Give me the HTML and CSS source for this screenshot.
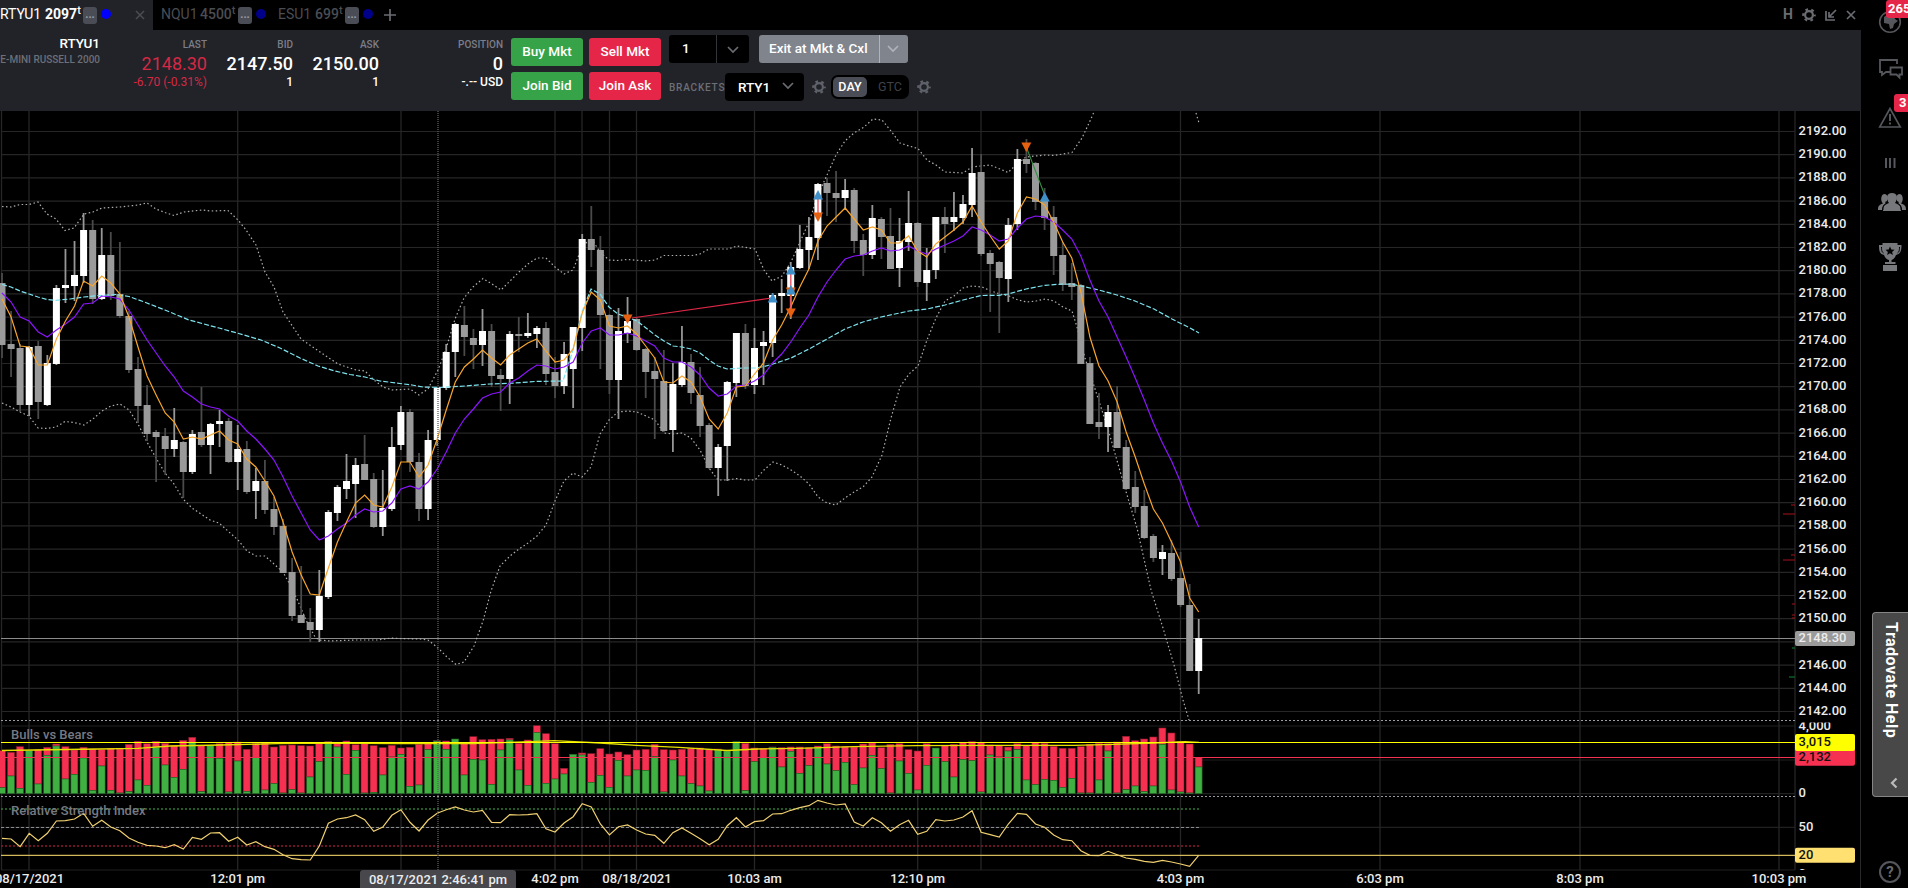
FILE: index.html
```
<!DOCTYPE html>
<html lang="en">
<head>
<meta charset="UTF-8">
<title>RTYU1 2097t</title>
<link rel="stylesheet" href="styles.css">
</head>
<body>
<svg class="defs">
  <symbol id="gear" viewBox="0 0 14 14">
    <circle cx="7" cy="7" r="3.9" fill="none" stroke="currentColor" stroke-width="2.2"/>
    <circle cx="7" cy="7" r="5.7" fill="none" stroke="currentColor" stroke-width="2.2" stroke-dasharray="2.7 3.269" stroke-dashoffset="1.35"/>
  </symbol>
  <symbol id="chevron" viewBox="0 0 12 8">
    <path d="M1 1l5 5 5-5" fill="none" stroke="currentColor" stroke-width="1.7"/>
  </symbol>
</svg>

<div class="main">
  <div class="tabs">
    <div class="tab active">
      <span class="sym">RTYU1</span><b>2097<sup>t</sup></b><i class="more">...</i><i class="dot"></i>
      <svg class="close" width="10" height="10"><path d="M1 1l8 8M9 1l-8 8"/></svg>
    </div>
    <div class="tab nq">
      <span class="sym">NQU1</span><b>4500<sup>t</sup></b><i class="more">...</i><i class="dot"></i>
    </div>
    <div class="tab es">
      <span class="sym">ESU1</span><b>699<sup>t</sup></b><i class="more">...</i><i class="dot"></i>
    </div>
    <svg class="plus" width="12" height="12"><path d="M6 0v12M0 6h12"/></svg>
    <div class="win">
      <b>H</b>
      <svg width="14" height="14"><use href="#gear"/></svg>
      <svg width="12" height="12"><path d="M1 2v9h9M11 1l-7 7M4 3v5h5"/></svg>
      <svg width="10" height="10"><path d="M1 1l8 8M9 1l-8 8"/></svg>
    </div>
  </div>

  <div class="header">
    <div class="col name"><strong>RTYU1</strong><small>E-MINI RUSSELL 2000</small></div>
    <div class="col last"><label>LAST</label><span class="big">2148.30</span><span class="sub">-6.70 (-0.31%)</span></div>
    <div class="col bid"><label>BID</label><span class="big">2147.50</span><span class="sub">1</span></div>
    <div class="col ask"><label>ASK</label><span class="big">2150.00</span><span class="sub">1</span></div>
    <div class="col pos"><label>POSITION</label><span class="big">0</span><span class="sub">-.-- USD</span></div>
    <div class="orders">
      <button class="buy">Buy Mkt</button><button class="sell">Sell Mkt</button>
      <button class="buy">Join Bid</button><button class="sell">Join Ask</button>
    </div>
    <div class="controls">
      <div class="line">
        <div class="qty"><span>1</span><em><svg width="12" height="8"><use href="#chevron"/></svg></em></div>
        <div class="exit"><span>Exit at Mkt &amp; Cxl</span><em><svg width="12" height="8"><use href="#chevron"/></svg></em></div>
      </div>
      <div class="line second">
        <label>BRACKETS</label>
        <div class="select"><span>RTY1</span><svg width="12" height="8"><use href="#chevron"/></svg></div>
        <svg class="gear" width="14" height="14"><use href="#gear"/></svg>
        <div class="tif"><span class="on">DAY</span><span>GTC</span></div>
        <svg class="gear" width="14" height="14"><use href="#gear"/></svg>
      </div>
    </div>
  </div>

  <svg id="chart" width="1861" height="777" viewBox="0 111 1861 777"></svg>
</div>

<div class="side">
  <svg width="47" height="300" fill="none" stroke="#55575c" stroke-width="1.6">
    <circle cx="29" cy="22" r="10.3"/>
    <path d="M23 17l4-3 6 1 1 4 3 2-4 3-1 4-3 1-1-5-5-1z" fill="#55575c" stroke="none"/>
    <path d="M29 72l-4 0-4 3v-3h-2V60h17v4" stroke-width="1.8"/>
    <path d="M29.500 67.500h11.500v7h-2.500v3l-3-3h-6z" stroke-width="1.8"/>
    <path d="M29 108.500l10.300 18.500H18.700z"/>
    <path d="M29 114v7M29 122.500v2" stroke-width="2"/>
    <path d="M25 158v10M29 158v10M33.500 158v10" stroke-width="2"/>
    <g fill="#77787b" stroke="none">
      <path d="M17 210c0-4 1-5 5-6.500-3-3-2-9.500 1.500-9.500 3 0 4 4 2.500 7l-2 3c-2 1-3 3-3 6z"/>
      <path d="M45 210c0-4-1-5-5-6.500 3-3 2-9.500-1.500-9.500-3 0-4 4-2.500 7l2 3c2 1 3 3 3 6z"/>
      <path d="M22 211c0-5 1-6 6-8-3-4-3-10 3-10s6 6 3 10c5 2 6 3 6 8z"/>
      <path d="M21.500 243h15v2h4c0 7-1.500 9-5.500 10-1 3-3 4.500-4.500 5v2h4v2H24v-2h4v-2c-2-.5-4-2-5-5-4-1-5-3-5-10h3.500z"/>
      <path d="M22 265h14v6H22z"/>
    </g>
    <path d="M24 202.500c1.500-.5 2-1 2.500-2M38 202.500c-1.500-.5-2-1-2.500-2M22 210c0-3 .5-5 2.500-6M40 210c0-3-.5-5-2.500-6" stroke="#000" stroke-width=".8"/>
    <path d="M29 246.500l1.300 3 3.200.3-2.400 2.100.8 3.100-2.900-1.700-2.900 1.700.8-3.100-2.400-2.100 3.200-.3z" fill="#000" stroke="none"/>
    <path d="M20.500 247c0 4 .5 5 2 6M38.500 247c0 4-.5 5-2 6" stroke="#000" stroke-width="1"/>
  </svg>
  <span class="badge b1">265</span>
  <span class="badge b2">3</span>
  <div class="help"><span>Tradovate Help</span><svg width="8" height="12"><path d="M6.500 1.500L2 6l4.500 4.500"/></svg></div>
  <div class="question">?</div>
</div>
<script src="chart.js"></script>
</body>
</html>
```
FILE: styles.css
```
* { box-sizing: border-box; }
body {
  margin: 0;
  width: 1908px;
  height: 888px;
  overflow: hidden;
  display: flex;
  background: #000;
  color: #fff;
  font-family: Roboto, sans-serif;
}
i, em { font-style: normal; }
svg { display: block; flex: none; }
.defs { position: absolute; width: 0; height: 0; }
.main { width: 1861px; flex: none; }

/* tabs */
.tabs { display: flex; height: 30px; }
.tab {
  display: flex;
  align-items: center;
  height: 30px;
  color: #4b4d53;
  font-size: 14px;
  white-space: nowrap;
}
.tab.active { width: 153px; background: #222328; color: #fff; }
.tab b { font-weight: 700; width: 38px; margin-left: 5px; height: 20px; line-height: 20px; margin-top: -2px; }
.tab .sym { height: 20px; line-height: 20px; width: 40px; margin-top: -2px; font-weight: 400; }
.tab sup { font-size: 11px; line-height: 0; vertical-align: 5px; font-weight: 500; }
.tab.nq { margin-left: 8px; }
.tab.nq .sym { width: 35px; }
.tab.es { margin-left: 12px; }
.tab.es .sym { width: 33px; }
.tab.es b { width: 30px; }
.tab.nq b { width: 38px; }
.tab.nq b, .tab.es b { font-weight: 500; margin-left: 4px; }
.more {
  width: 14px;
  height: 17px;
  border-radius: 3px;
  background: #4a4d56;
  color: #9a9da5;
  font-size: 11px;
  font-weight: 700;
  line-height: 15px;
  text-align: center;
}
.dot { width: 10px; height: 10px; border-radius: 5px; background: #00008a; margin: -2px 0 0 4px; }
.active .dot { background: #0000ff; }
.close { margin-left: 24px; }
.close path { stroke: #4b4d53; stroke-width: 1.5; }
.plus { margin: 9px 0 0 11px; }
.plus path { stroke: #6a6c71; stroke-width: 1.7; }
.win { display: flex; align-items: center; margin-left: auto; padding-right: 5px; color: #6a6c71; height: 30px; }
.win b { font-size: 14px; width: 19px; margin-top: -2px; }
.win svg + svg { margin-left: 9px; }
.win path { fill: none; stroke: #6a6c71; stroke-width: 1.7; }

/* order header */
.header { display: flex; height: 81px; background: #222328; }
.col { display: flex; flex-direction: column; text-align: right; white-space: nowrap; padding-top: 8px; flex: none; }
.col label { font-size: 10px; line-height: 13px; color: #7b7e87; font-weight: 500; }
.big { font-size: 18px; line-height: 21px; margin-top: 2px; font-weight: 500; }
.sub { font-size: 12px; line-height: 15px; margin-top: 1px; font-weight: 500; }
.name { width: 100px; align-items: flex-end; padding-top: 5px; }
.name strong { font-size: 13.500px; line-height: 16px; font-weight: 500; }
.name small { font-size: 10px; line-height: 12px; margin-top: 3px; color: #6c6f77; font-weight: 500; }
.last { width: 107px; }
.last .big, .last .sub { color: #d42845; font-weight: 400; }
.bid, .ask { width: 86px; }
.pos { width: 124px; }
.orders {
  display: grid;
  grid-template-columns: 72px 72px;
  grid-template-rows: 28px 28px;
  gap: 6px;
  margin: 8px 0 0 8px;
}
.orders button {
  border: 0;
  padding: 0 0 2px;
  border-radius: 3px;
  color: #fff;
  font: 500 13.500px Roboto, sans-serif;
  white-space: nowrap;
}
.buy { background: #37a349; }
.sell { background: #e62648; }
.controls { margin: 5px 0 0 8px; }
.line { display: flex; height: 28px; }
.line.second { margin-top: 10px; align-items: center; }
.qty, .exit { display: flex; height: 28px; border-radius: 3px; font-size: 13.500px; font-weight: 500; line-height: 27px; }
.qty { width: 80px; background: #000; color: #fff; }
.qty span { width: 47px; padding-left: 13px; }
.qty em { width: 33px; border-left: 1px solid #33353b; padding: 11px 0 0 10px; color: #6a6c71; }
.exit { width: 149px; margin-left: 10px; background: #80848d; white-space: nowrap; }
.exit span { width: 120px; padding-left: 10px; }
.exit em { width: 29px; border-left: 1px solid #b0b3b9; padding: 10px 0 0 7px; color: #b0b3b9; }
.second label { font-size: 10px; letter-spacing: .8px; color: #6c6f77; width: 56px; font-weight: 500; white-space: nowrap; }
.select {
  display: flex;
  align-items: center;
  width: 79px;
  height: 28px;
  border-radius: 4px;
  background: #000;
  padding: 0 10px 0 13px;
  justify-content: space-between;
  font-size: 13.500px;
  font-weight: 500;
  color: #fff;
}
.select svg { color: #6a6c71; margin-top: -2px; }
.gear { color: #5f626a; margin: 0 5px 0 8px; }
.tif {
  display: flex;
  align-items: center;
  width: 78px;
  height: 24px;
  margin-right: 0;
  border-radius: 7px;
  background: #000;
  padding: 2px;
  font-size: 12.500px;
  line-height: 20px;
  color: #3f4249;
}
.tif span { width: 38px; text-align: center; padding-left: 4px; }
.tif .on { width: 34px; background: #4a4d56; color: #fff; border-radius: 5px; font-weight: 500; padding: 0; margin-right: 2px; }
.tif + .gear { margin-right: 0; }

/* chart */
#chart text { font: 500 13px Roboto, sans-serif; fill: #ececec; }
#chart .study { fill: #777982; }
#chart .dark { fill: #111; }
#chart .mid { text-anchor: middle; }
.thin { fill: none; stroke-width: 1.2; }

/* side bar */
.side { position: relative; width: 47px; flex: none; }
.badge {
  position: absolute;
  right: 0;
  height: 18px;
  padding-left: 2px;
  overflow: hidden;
  background: #e62648;
  border-radius: 3px 0 0 3px;
  font-size: 13px;
  font-weight: 700;
  line-height: 18px;
}
.b1 { top: 0; width: 22px; }
.b2 { top: 94px; width: 14px; padding-left: 5px; }
.help {
  position: absolute;
  right: 0;
  top: 612px;
  width: 36px;
  height: 185px;
  padding-top: 9px;
  border: 1px solid #858585;
  border-right: 0;
  border-radius: 4px 0 0 4px;
  background: #484848;
}
.help span { display: block; margin-left: 8px; writing-mode: vertical-rl; font-size: 16px; line-height: 20px; font-weight: 700; letter-spacing: .5px; white-space: nowrap; height: 120px; }
.help svg { margin: 35px 0 0 17px; }
.help path { fill: none; stroke: #bbb; stroke-width: 2.200; }
.question {
  position: absolute;
  left: 18px;
  top: 861px;
  width: 22px;
  height: 22px;
  border: 2px solid #55575c;
  border-radius: 50%;
  color: #66686d;
  font-size: 15px;
  font-weight: 700;
  line-height: 18px;
  text-align: center;
}
```
FILE: chart.js
```
const svg = document.getElementById('chart');
let out = '';
const X = i => +(2 + i * 9.066).toFixed(2);

function line(x1, y1, x2, y2, color, w = 1, extra = '') {
  out += `<line x1="${x1}" y1="${y1}" x2="${x2}" y2="${y2}" stroke="${color}" stroke-width="${w}" ${extra}/>`;
}
function rect(x, y, w, h, color, extra = '') {
  out += `<rect x="${x}" y="${y}" width="${w}" height="${h}" fill="${color}" ${extra}/>`;
}
function text(x, y, s, cls = '') {
  out += `<text x="${x}" y="${y}" class="${cls}">${s}</text>`;
}
function poly(points, color, extra = '') {
  out += `<polyline class="thin" points="${points}" stroke="${color}" ${extra}/>`;
}
const series = ys => ys.map((y, i) => X(i) + ',' + y).join(' ');

// high, body top, body bottom, low, up = 1
const candles = [
[273,283,345,358,0],[311,344,349,377,0],[344,348,405,412,0],[346,347,405,416,1],[341,346,402,419,0],[355,363,405,406,1],
[285,288,364,365,1],[249,285,288,303,1],[241,275,286,301,1],[213,230,276,283,1],[220,230,299,304,0],[228,255,299,300,1],
[232,255,296,300,0],[242,294,316,318,0],[311,316,370,373,0],[357,369,406,423,0],[385,405,434,441,0],[430,432,437,482,0],
[428,436,449,475,0],[408,440,449,457,1],[441,442,472,498,0],[430,434,472,474,1],[387,432,445,447,0],[423,424,445,474,1],
[410,421,424,447,1],[418,421,462,463,0],[425,449,462,490,1],[441,449,492,494,0],[468,481,491,519,1],[460,481,510,514,0],
[497,509,527,535,0],[519,526,573,573,0],[558,572,616,621,0],[566,615,623,623,0],[608,622,630,642,0],[570,596,630,642,1],
[510,512,597,599,1],[485,487,513,521,1],[454,481,489,499,1],[458,465,484,518,1],[435,464,480,480,0],[473,479,527,528,0],
[470,508,527,536,1],[427,447,509,511,1],[406,412,445,450,1],[409,412,462,472,0],[453,462,509,521,0],[430,440,509,520,1],
[387,388,440,446,1],[344,352,388,390,1],[323,324,352,377,1],[306,325,337,356,0],[329,338,345,369,0],[309,331,345,366,1],
[324,331,376,387,0],[369,375,379,411,0],[331,334,379,404,1],[317,334,336,352,0],[313,333,336,338,1],[326,328,334,348,1],
[322,328,374,385,0],[357,372,386,398,0],[342,354,386,394,1],[327,327,369,408,1],[234,239,328,351,1],[206,239,250,267,0],
[236,250,315,369,0],[314,315,380,394,0],[308,331,380,419,1],[297,321,333,343,1],[318,319,350,351,0],[348,349,372,398,0],
[357,371,379,439,0],[350,381,431,432,0],[363,384,430,452,1],[326,362,385,387,1],[354,362,393,404,0],[367,395,426,437,0],
[423,425,468,469,0],[444,447,468,496,1],[381,382,446,481,1],[333,333,383,397,1],[324,333,386,389,0],[328,348,385,394,1],
[331,342,346,385,1],[293,295,343,357,1],[279,293,296,313,1],[262,267,296,319,1],[225,249,268,269,1],[217,237,250,269,1],
[183,184,238,260,1],[178,183,193,216,0],[171,193,198,222,0],[179,190,198,210,1],[188,190,241,253,0],[234,240,255,276,0],
[205,218,255,259,1],[217,219,237,259,0],[208,236,269,269,0],[218,241,268,287,1],[191,223,242,251,1],[222,223,282,287,0],
[248,270,283,301,1],[217,217,270,279,1],[207,217,224,253,0],[192,217,222,231,1],[195,204,218,224,1],[148,173,205,217,1],
[154,172,254,256,0],[250,253,264,312,0],[261,262,278,333,0],[218,225,279,302,1],[149,159,224,230,1],[139,159,164,173,0],
[162,163,202,210,0],[188,201,218,230,0],[206,217,256,275,0],[242,255,285,291,0],[263,283,287,300,0],[284,285,364,364,0],
[357,363,424,424,0],[393,422,427,439,0],[405,412,427,452,1],[386,412,448,448,0],[440,447,489,490,0],[471,487,507,513,0],
[490,506,538,539,0],[534,536,558,562,0],[545,552,559,575,1],[540,553,579,581,0],[552,578,605,607,0],[584,605,671,671,0],
[619,638,671,694,1]];

const fast = [299,317,346,347,365,365,339,321,306,281,286,276,283,294,317,347,376,395,413,
422,439,437,439,435,431,440,444,459,467,481,496,522,552,575,594,595,568,542,522,503,495,505,507,487,
462,462,477,465,439,410,382,367,359,350,358,365,355,349,343,339,351,362,360,349,313,292,300,326,328,326,334,346,358,382,383,376,382,397,419,429,413,387,386,374,363,
340,325,307,287,269,241,226,217,208,219,230,227,230,243,243,236,251,257,244,237,230,222,206,222,236,249,241,213,197,199,205,222,242,258,292,337,366,
381,402,432,457,484,509,523,542,562,598,612];

const slow = [293,302,317,321,332,337,330,324,317,304,303,296,297,299,310,325,340,353,366,377,391,397,404,407,409,416,421,431,439,449,460,477,496,513,530,540,536,529,523,515,509,512,511,503,
489,486,489,482,469,452,433,419,409,398,394,392,383,378,371,365,366,369,367,362,343,331,328,335,335,333,336,341,346,358,362,362,367,375,388,396,394,386,385,381,375,363,354,
342,328,315,297,282,270,259,256,255,251,248,251,250,246,251,254,249,245,241,236,227,230,235,241,239,228,219,216,217,222,230,239,256,280,301,317,337,357,378,400,423,443,461,482,507,527];

const vwap = '2,284.5 11,287 20,291 29,294 38,297 47,299.5 56,300.3 70,299 84,297 100,295.5 116,294.5 129,296.5 143,301.5 165,310 189,320 219,328 237,333 261,340 280,348 300,358 318,366 335,371 350,374.5 365,377 380,381 400,383.5 412,385 423,387 440,387.5 465,386 490,384 515,383 535,381.5 563,381 573,350 582,312 591,289 600,294 609,307 618,314 627,317 637,321 646,328 655,335 664,341 673,346 682,347 691,349 700,353 709,360 718,366 727,369 745,368 755,368 764,366.5 773,364 791,358 809,349 827,339 845,329 863,322 881,317 909,311 927,309 945,305 963,300 981,295.5 999,295.3 1008,294 1026,289 1045,285.3 1063,284 1072,284.3 1081,286 1099,290 1117,295 1135,301 1154,309 1172,319 1190,328 1199,333';

const upper = '2,206.5 11,207 20,204.5 29,204.5 38,202 47,214 56,219 65,230.5 74,228 84,214 93,212 102,208 120,207 138,205 147,203 156,209 165,212.5 174,215.5 184,212 202,210 211,211 228,210.5 238,220 246,230 256,245 265,272 274,287 283,312 301,339 320,352 338,364 356,370 365,371 374,380 383,387 392,390 410,389 419,395 428,389 438,370 446,349 455,319 464,298 473,287 483,278.5 492,284 501,290 510,281 519,272 528,264 537,258 546,258 555,267 564,274 573,270 582,247 591,238 600,252 609,260 618,260.5 627,259.5 646,261 655,260 664,255.5 692,255.5 700,254 709,249 728,249 737,246 755,249 764,270 772,281 782,276 791,262 800,242 809,222 818,195 827,175 836,155 845,141 854,133 864,127 873,119 882,120 891,131 900,143 909,146 918,148.5 927,160 936,165 945,172 963,173 972,167 990,165 1000,169 1008,172.5 1017,164 1026,157 1045,155 1054,155.5 1072,152.5 1082,138 1090,121 1094,112';

const lower = '2,403 11,407 20,412 29,416 38,428 47,428.5 56,427 65,421.5 74,422.5 84,425 93,419 102,411 111,406 120,404 129,410 138,424 147,442 156,458 165,473 174,484 183,499 192,508 201,514 210,520 219,523 229,532 238,540 247,551 256,556 265,556 274,564 283,572 288,581 297,599 306,620 315,637 319,640 330,641 356,640 378,640 391,638 400,638.5 420,639 428,640 437,647 447,657 456,664.5 464,662 474,646 483,621 491,591 500,566 510,556 519,549 528,543 537,536 546,525 555,501 564,481 573,473 582,477 591,467 600,434 609,420 618,412 628,411 637,412 646,416 655,420 664,433 673,434 682,433 691,438 700,450 709,468 718,480 727,480 737,478.5 745,480 755,480 764,470 773,462 782,465 791,470 800,476 809,484 818,497 827,503 836,505 845,498 854,492 863,487 872,477 882,455 891,418 900,387 909,374 918,366 927,340 936,318 945,301 954,296 963,288 972,286 982,287 991,291 1000,294 1009,296 1018,300 1027,302 1036,301 1045,299 1054,301 1063,307 1072,311 1077,327 1085,358 1097,395 1108,429 1124,485 1137,528 1151,590 1163,628 1174,665 1183,700 1189,720';

// bar top and green top, thirds of a pixel below 700
const bulls = [[152,263],[157,228],[140,265],[152,152],[149,252],[142,166],[132,138],[140,237],[150,223],[142,174],[147,271],[149,198],[145,271],[147,279],[133,275],[124,240],[131,256],[124,142],[130,195],[137,232],[121,208],[112,127],[136,275],[137,137],[131,175],[128,276],[126,183],[148,274],[131,172],[128,270],[141,251],[136,279],[135,269],[137,279],[138,231],[128,185],[124,126],[130,141],[123,223],[134,151],[130,279],[137,277],[143,225],[136,171],[144,163],[142,259],[133,255],[131,149],[122,123],[123,148],[117,117],[131,225],[110,178],[119,180],[118,253],[117,150],[115,120],[130,210],[120,256],[77,98],[101,250],[131,237],[205,222],[163,163],[159,165],[161,247],[146,226],[162,262],[156,181],[164,228],[150,210],[148,211],[133,170],[149,276],[150,180],[148,228],[145,251],[144,258],[148,273],[147,150],[153,153],[125,125],[130,272],[144,185],[145,173],[141,142],[143,201],[141,154],[141,220],[143,197],[138,142],[131,192],[138,212],[139,187],[141,254],[132,204],[129,166],[143,206],[133,279],[131,183],[149,220],[153,270],[131,196],[144,144],[137,185],[133,231],[127,179],[125,182],[128,276],[135,165],[137,171],[141,153],[131,149],[136,240],[128,254],[130,238],[139,241],[145,262],[145,235],[140,279],[133,279],[130,240],[131,153],[126,279],[109,269],[122,258],[117,275],[111,258],[84,133],[99,270],[124,276],[132,279],[172,201]];

const rsi = [415,417,440,400,422,400,363,362,357,340,379,361,381,392,414,427,436,438,443,434,447,412,418,399,398,424,412,435,425,440,448,464,476,479,480,438,370,357,353,345,359,394,381,346,329,367,393,360,340,329,321,330,336,331,367,368,344,345,344,341,386,396,369,350,311,321,372,405,380,375,390,402,406,430,398,384,400,416,434,418,377,353,381,365,362,342,341,331,323,317,301,309,315,312,366,378,353,368,394,374,361,403,394,359,363,360,351,332,397,404,411,372,340,343,372,382,405,419,422,452,466,467,454,464,474,478,484,487,481,486,492,499,466];

const average = '2,750.5 99,749 138,748.3 170,746 221,745 277,743.7 328,743 395,743.7 474,743.7 530,741.7 554,740.7 600,743 636,745.3 679,747.3 727,750.5 758,749 798,748.3 853,746.7 916,745.7 995,745.3 1074,745.3 1114,744.3 1154,743 1185,741.7 1199,742.3';

// grid
for (let p = 2192, y = 131.5; p >= 2142; p -= 2, y += 23.2) {
  line(1, y.toFixed(1), 1795, y.toFixed(1), '#262627', 1.2);
  if (p !== 2148) text(1798.5, (y + 3.5).toFixed(1), p + '.00');
}
[726, 760, 793.7, 827.3, 870].forEach(y => line(1, y, 1795, y, '#202021', 1.2));
[1.5, 29, 237.7, 401, 555, 582, 609.5, 636.5, 754.5, 917.7, 981, 1180.5, 1380, 1580, 1779, 1795].forEach(x => line(x, 111, x, 870, '#262627', 1.3));
line(1860.5, 111, 1860.5, 888, '#29292d');

// volume split
bulls.forEach(([t, g], i) => {
  const x = X(i) - 3.6, top = 700 + t / 3, green = 700 + g / 3;
  rect(x.toFixed(1), top.toFixed(1), 7, (green - top).toFixed(1), '#f53051', 'stroke="#8a1b2e" stroke-width=".6"');
  rect(x.toFixed(1), green.toFixed(1), 7, (793.5 - green).toFixed(1), '#3fb041', 'stroke="#236525" stroke-width=".6"');
});
poly(average, '#e6e000', 'style="stroke-width:1.3"');
line(1, 742.5, 1795, 742.5, '#ffff00', 1);
line(1, 757.5, 1795, 757.5, '#f53051', 1);

// rsi
line(1, 809, 1199, 809, '#2f7a35', 1.7, 'stroke-dasharray="2 2"');
line(1, 827.5, 1199, 827.5, '#8b8b93', 1, 'stroke-dasharray="3 2"');
line(1, 846, 1199, 846, '#8e1930', 1.7, 'stroke-dasharray="2 2"');
line(1, 855.3, 1795, 855.3, '#d3b95c', 1.2);
poly(series(rsi.map(v => +(700 + v / 3).toFixed(1))), '#f0d070');
line(1, 720.5, 1795, 720.5, '#9a9aa0', 1, 'stroke-dasharray="2 2"');
line(1, 796.5, 1795, 796.5, '#9a9aa0', 1, 'stroke-dasharray="2 2"');

// price pane
line(1, 638.5, 1795, 638.5, '#8b8b8b', 1);
poly(upper, '#b0b0b0', 'stroke-dasharray="1.5 2.5"');
poly('1196,113 1199,123', '#b0b0b0', 'stroke-dasharray="1.5 2.5"');
poly(lower, '#b0b0b0', 'stroke-dasharray="1.5 2.5"');
candles.forEach(([h, t, b, l, up], i) => {
  const x = X(i);
  line(x, h, x, l, up ? '#979797' : '#4a4a4a', 1.8);
  rect((x - 3.5).toFixed(1), t, 7, Math.max(b - t, 1), up ? '#fff' : '#9a9a9a');
});
poly(vwap, '#7de3ee', 'stroke-dasharray="5 2"');
poly(series(slow), '#8c14ff');
poly(series(fast), '#f8a52c');
line(438, 111, 438, 870, '#5d5d60', 1.3, 'stroke-dasharray="1 1"');

// fills
line(632, 318, 772, 298, '#dc2846', 1.1);
line(790.8, 272, 790.8, 313, '#ef5367', 1.4);
line(818, 195, 818, 217, '#ef5367', 1.4);
line(1026.3, 147, 1044.7, 195, '#2f9040', 1.1);
const sell = (x, y) => out += `<path d="M${x - 5} ${y - 4.5}h10l-5 9.500z" fill="#e5600f"/>`;
const buy = (x, y) => out += `<path d="M${x - 5} ${y + 4.5}h10l-5 -9.500z" fill="#3f8fc8"/>`;
sell(627.5, 319); sell(790.8, 292); sell(790.8, 313); sell(818, 217); sell(1026.3, 147);
buy(772.7, 298); buy(790.8, 270); buy(790.8, 290); buy(818, 195); buy(1044.7, 197);

// book depth at the right edge
[[1791,505],[1783,514],[1791,555],[1783,560],[1792,604],[1792,615],[1792,618]].forEach(([x, y]) => line(x, y, 1795, y, '#8a1119', 1.2));
[[1792,648],[1789,677]].forEach(([x, y]) => line(x, y, 1795, y, '#0d5a22', 1.5));

// scale labels
out += '<clipPath id="c1"><rect x="1795" y="722.500" width="65" height="20"/></clipPath><clipPath id="c2"><rect x="1795" y="860" width="65" height="10"/></clipPath>';
out += '<g clip-path="url(#c1)"><text x="1798.500" y="729.500">4,000</text></g>';
out += '<g clip-path="url(#c2)"><text x="1798.500" y="877.500">0</text></g>';
text(1798.5, 797, '0');
text(1798.5, 831, '50');
rect(1795, 631, 60, 15, '#9a9a9a', 'rx="2"');
text(1798.5, 642.3, '2148.30');
rect(1795, 748, 60, 17.7, '#f53051', 'rx="2"');
text(1798.5, 761, '2,132', 'dark');
rect(1795, 734, 60, 17, '#ffff00', 'rx="2"');
text(1798.5, 746.2, '3,015', 'dark');
rect(1795, 847.7, 60, 15, '#ffe070', 'rx="2"');
text(1798.5, 858.7, '20', 'dark');

text(11, 739, 'Bulls vs Bears', 'study');
text(11, 814.7, 'Relative Strength Index', 'study');

[[29.5,'08/17/2021'],[237.7,'12:01 pm'],[555,'4:02 pm'],[637,'08/18/2021'],[754.5,'10:03 am'],[917.7,'12:10 pm'],[1180.5,'4:03 pm'],[1380,'6:03 pm'],[1580,'8:03 pm'],[1779,'10:03 pm']]
  .forEach(([x, s]) => text(x, 882.6, s, 'mid'));
rect(360, 870, 156, 20, '#47474c', 'rx="3"');
text(438, 883.7, '08/17/2021 2:46:41 pm', 'mid');

svg.innerHTML = out;
```
